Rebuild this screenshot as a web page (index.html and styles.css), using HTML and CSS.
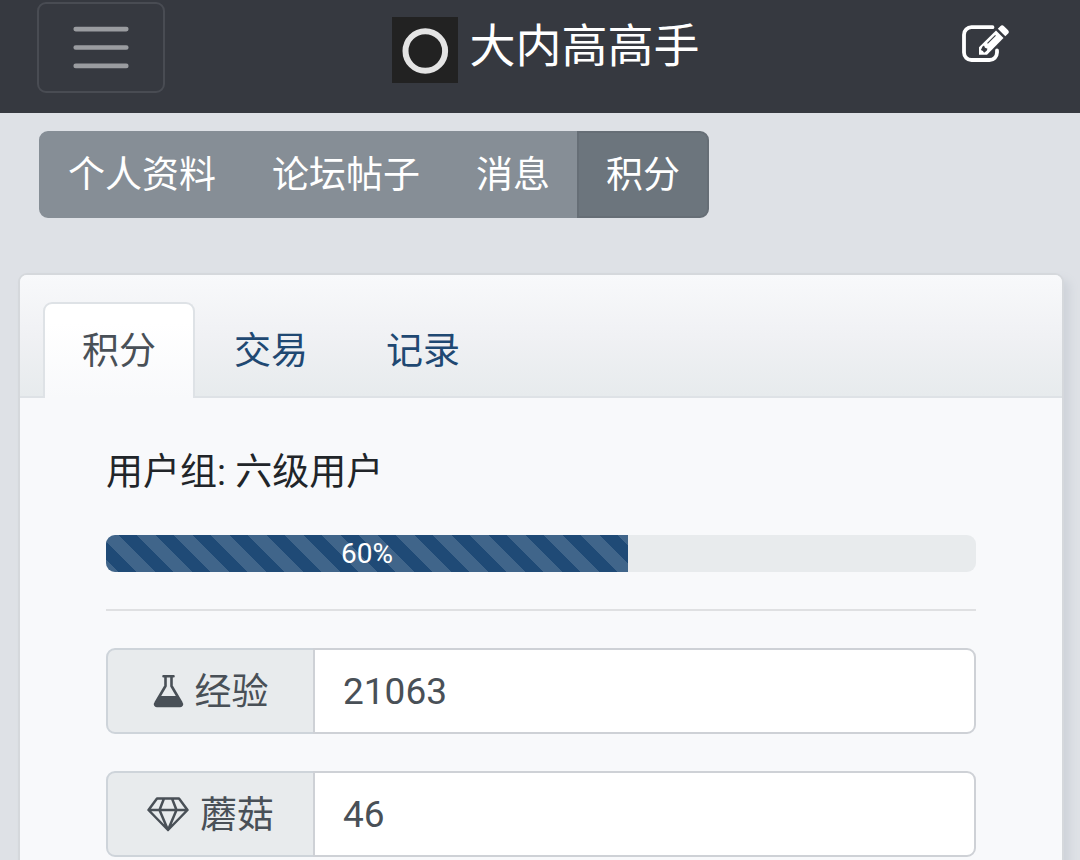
FILE: index.html
```html
<!DOCTYPE html>
<html lang="zh-CN">
<head>
<meta charset="utf-8">
<meta name="viewport" content="width=device-width, initial-scale=1">
<title>大内高高手 - 积分</title>
<link rel="stylesheet" href="styles.css">
</head>
<body>
<header class="navbar">
  <button class="toggler" type="button" aria-label="菜单">
    <svg class="toggler-icon" viewBox="0 0 30 30" aria-hidden="true"><path d="M4 7h22M4 15h22M4 23h22" fill="none" stroke="currentColor" stroke-width="2" stroke-linecap="round"/></svg>
  </button>
  <a class="brand" href="#">
    <svg class="brand-logo" viewBox="0 0 66 66" aria-hidden="true"><rect width="66" height="66" fill="#222"/><circle cx="33.3" cy="34" r="19.8" fill="none" stroke="#e4e4e4" stroke-width="6"/></svg>
    <span class="brand-name">大内高高手</span>
  </a>
  <a class="compose" href="#" aria-label="发新帖">
    <svg class="compose-icon" viewBox="0 0 47 38" aria-hidden="true">
      <path d="M30.500 2.200H9.500a7.500 7.500 0 0 0-7.500 7.500V27.500a7.500 7.500 0 0 0 7.500 7.500H27.500a7.500 7.500 0 0 0 7.500-7.500V25.500" fill="none" stroke="#fff" stroke-width="3.800" stroke-linecap="round"/>
      <path d="M34 5.500 41.500 13 25 29.800H17V22.200Z" fill="#fff"/>
      <path d="M35.800 3.700 38.300 1.200a2.600 2.600 0 0 1 3.700 0l3.900 3.900a2.600 2.600 0 0 1 0 3.700L43.300 11.300Z" fill="#fff"/>
      <path d="m20.500 21.500 1.500-1 1 2.300 2.500.9-.8 2-2.600 2-1.200-1.800-2-.8Z" fill="#363940"/>
      <path d="m25.500 18.300 8-8" stroke="#363940" stroke-width="1.100"/>
    </svg>
  </a>
</header>
<main class="page">
  <nav class="pills" aria-label="个人中心">
    <a class="pill" href="#">个人资料</a>
    <a class="pill" href="#">论坛帖子</a>
    <a class="pill" href="#">消息</a>
    <a class="pill active" href="#" aria-current="page">积分</a>
  </nav>
  <section class="card">
    <div class="card-header">
      <nav class="tabs">
        <a class="tab active" href="#" aria-current="true">积分</a>
        <a class="tab" href="#">交易</a>
        <a class="tab" href="#">记录</a>
      </nav>
    </div>
    <div class="card-body">
      <p class="group-name">用户组: 六级用户</p>
      <div class="progress" role="progressbar" aria-label="升级进度" aria-valuenow="60" aria-valuemin="0" aria-valuemax="100">
        <div class="progress-bar" style="width: 60%">60%</div>
      </div>
      <hr class="rule">
      <div class="field">
        <label class="field-label" for="exp">
          <svg class="flask" viewBox="0 0 31 34" aria-hidden="true"><path d="M10.500 2.200h10M12.500 2.500v9.500L2.500 29a1.800 1.800 0 0 0 1.500 3h23a1.800 1.800 0 0 0 1.500-3L18.500 12V2.500" fill="none" stroke="currentColor" stroke-width="2.600" stroke-linecap="round" stroke-linejoin="round"/><path d="M6.300 22h18.400l4.300 7-1 3.200H3L2 29Z" fill="currentColor"/></svg>
          <span class="field-name">经验</span>
        </label>
        <input class="field-input" id="exp" type="text" value="21063" readonly>
      </div>
      <div class="field">
        <label class="field-label" for="mushroom">
          <svg class="gem" viewBox="0 0 42 36" aria-hidden="true"><path d="M10 2.500h22l8.500 11.500L21 34 1.500 14ZM1.500 14h39M10 2.500h22M17 2.500 12.500 14 21 34l8.500-20L25 2.500" fill="none" stroke="currentColor" stroke-width="2.500" stroke-linejoin="round"/></svg>
          <span class="field-name">蘑菇</span>
        </label>
        <input class="field-input" id="mushroom" type="text" value="46" readonly>
      </div>
    </div>
  </section>
</main>
</body>
</html>
```
FILE: styles.css
```css
*, *::before, *::after {
  box-sizing: border-box;
}

body {
  margin: 0;
  background: #dee1e6;
  color: #212529;
  font-family: Roboto, "Noto Sans CJK SC", sans-serif;
  font-size: 37px;
  line-height: 55px;
}

a {
  text-decoration: none;
}

.navbar {
  display: flex;
  align-items: center;
  justify-content: space-between;
  padding: 2px 35px 20px 37px;
  background: #363940;
}

.toggler {
  display: flex;
  padding: 9px 27px;
  border: 2px solid #494c53;
  border-radius: 9px;
  background: transparent;
  color: #9a9ca0;
}

.toggler-icon {
  width: 70px;
  height: 69px;
}

.brand {
  display: flex;
  gap: 12px;
  padding-top: 5px;
  color: #fff;
  font-size: 46px;
  line-height: 58px;
}

.brand-logo {
  width: 66px;
  height: 66px;
}

.compose {
  display: flex;
  padding: 0 36px 8px;
}

.compose-icon {
  width: 47px;
  height: 38px;
}

.page {
  padding: 18px 16px 0 18px;
}

.pills {
  display: flex;
  width: fit-content;
  margin-left: 21px;
}

.pill {
  padding: 15px 27px 13px;
  border: 2px solid #868e96;
  background: #868e96;
  color: #fff;
}

.pill + .pill {
  margin-left: -2px;
}

.pill:first-child {
  border-radius: 9px 0 0 9px;
}

.pill:last-child {
  border-radius: 0 9px 9px 0;
}

.pill.active {
  border-color: #666e76;
  background: #6c757d;
}

.card {
  margin-top: 55px;
  border: 2px solid #d5d8dc;
  border-radius: 9px;
  background: #f8f9fb;
  box-shadow: 6px 6px 9px #cfd3da;
}

.card-header {
  padding: 27px 23px 0;
  border-bottom: 2px solid #dee2e6;
  border-radius: 7px 7px 0 0;
  background: linear-gradient(#f8f9fb, #f0f1f4 50%, #e7ebed);
}

.tabs {
  display: flex;
  margin-bottom: -2px;
}

.tab {
  padding: 20px 37px 19px;
  border: 2px solid transparent;
  border-bottom: 0;
  border-radius: 9px 9px 0 0;
  color: #1f4872;
}

.tab.active {
  border-color: #dee2e6;
  background: linear-gradient(#fff 20%, #f8f9fb);
  color: #495057;
}

.card-body {
  padding: 47px 86px;
}

.group-name {
  margin: 0 0 35px;
}

.progress {
  height: 37px;
  overflow: hidden;
  border-radius: 9px;
  background: #e8ebed;
}

.progress-bar {
  height: 100%;
  background-color: #1f4a76;
  background-image: linear-gradient(45deg, rgba(255, 255, 255, .15) 25%, transparent 25%, transparent 50%, rgba(255, 255, 255, .15) 50%, rgba(255, 255, 255, .15) 75%, transparent 75%, transparent);
  background-position: -6px 0;
  background-size: 37px 37px;
  color: #fff;
  font-size: 28px;
  line-height: 37px;
  text-align: center;
}

.rule {
  margin: 37px 0;
  border: 0;
  border-top: 2px solid #dfe0e2;
}

.field {
  display: flex;
  margin-bottom: 37px;
}

.field-label {
  display: flex;
  flex: 0 0 209px;
  align-items: center;
  justify-content: center;
  gap: 11px;
  border: 2px solid #ced4da;
  border-radius: 9px 0 0 9px;
  background: #e8ebed;
  color: #495057;
}

.field-name {
  padding-top: 2px;
}

.field-input {
  flex: 1;
  min-width: 0;
  height: 86px;
  margin-left: -2px;
  padding: 14px 28px;
  border: 2px solid #ced1d6;
  border-radius: 0 9px 9px 0;
  background: #fff;
  color: #495057;
  font: inherit;
}

.flask {
  width: 31px;
  height: 34px;
}

.gem {
  width: 42px;
  height: 36px;
}
```
